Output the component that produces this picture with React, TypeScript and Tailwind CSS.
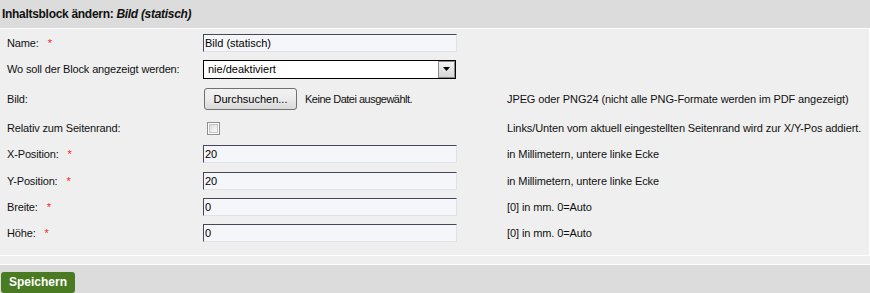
// inhaltsblock edit form (bild / statisch)

const font = { fontFamily: '"Liberation Sans", Arial, sans-serif' };

const Star = () => <span className="ml-[9px] text-[#ff1a1a]">*</span>;

const TextInput = ({ value }: { value: string }) => (
  <input
    type="text"
    defaultValue={value}
    className="w-[254px] h-[18px] bg-[#f5f6fa] border border-t-[#46465c] border-l-[#46465c] border-r-[#e1e2e8] border-b-[#e1e2e8] px-[1px] text-[11px] text-black outline-none"
  />
);

const Row = ({
  h,
  label,
  required,
  children,
  hint,
}: {
  h: string;
  label: string;
  required?: boolean;
  children?: React.ReactNode;
  hint?: string;
}) => (
  <div className={`grid grid-cols-[196px_304px_1fr] items-center pl-[7px] ${h}`}>
    <div className="text-[11px] tracking-[-0.15px] text-[#111]">
      {label}
      {required && <Star />}
    </div>
    <div className="flex items-center">{children}</div>
    <div className="text-[11px] tracking-[-0.1px] text-[#111] whitespace-nowrap">{hint}</div>
  </div>
);

export default function App() {
  return (
    <div className="w-[870px] bg-[#efefef]" style={font}>
      {/* title bar */}
      <div className="h-[29px] bg-[#dcdcdc] border-b border-white flex items-center pl-[2px] text-[12px] tracking-[-0.3px] font-bold text-[#111]">
        Inhaltsblock ändern:&nbsp;<i>Bild (statisch)</i>
      </div>

      {/* form rows */}
      <div className="pt-[1px] pb-[9px] border-b border-r border-white">
        <Row h="h-[26px]" label="Name:" required>
          <TextInput value="Bild (statisch)" />
        </Row>

        <Row h="h-[26px]" label="Wo soll der Block angezeigt werden:">
          <div className="w-[253px] h-[19px] bg-white border border-black flex items-center justify-between">
            <span className="pl-[4px] text-[11px] text-black">nie/deaktiviert</span>
            <span className="w-[17px] h-[17px] border border-[#8a8a8a] bg-gradient-to-b from-[#f4f4f4] to-[#d6d6d6] flex items-center justify-center">
              <svg width="7" height="4" viewBox="0 0 7 4">
                <path d="M0 0h7L3.5 4z" fill="#000" />
              </svg>
            </span>
          </div>
        </Row>

        <Row
          h="h-[34px]"
          label="Bild:"
          hint="JPEG oder PNG24 (nicht alle PNG-Formate werden im PDF angezeigt)"
        >
          <button className="ml-[1px] w-[93px] h-[22px] rounded-[3px] border border-[#707070] bg-gradient-to-b from-[#f2f2f2] via-[#ebebeb] to-[#d9d9d9] text-[11px] text-black">
            Durchsuchen...
          </button>
          <span className="ml-[8px] text-[11px] tracking-[-0.5px] text-[#111]">Keine Datei ausgewählt.</span>
        </Row>

        <Row
          h="h-[24px]"
          label="Relativ zum Seitenrand:"
          hint="Links/Unten vom aktuell eingestellten Seitenrand wird zur X/Y-Pos addiert."
        >
          <span className="ml-[4px] w-[13px] h-[13px] border border-[#8f8f8f] bg-white p-[1px]">
            <span className="block w-full h-full border border-[#c4c4c4] bg-gradient-to-br from-[#dcdcdc] to-[#fbfbfb]" />
          </span>
        </Row>

        <Row h="h-[28px]" label="X-Position:" required hint="in Millimetern, untere linke Ecke">
          <TextInput value="20" />
        </Row>

        <Row h="h-[26px]" label="Y-Position:" required hint="in Millimetern, untere linke Ecke">
          <TextInput value="20" />
        </Row>

        <Row h="h-[26px]" label="Breite:" required hint="[0] in mm. 0=Auto">
          <TextInput value="0" />
        </Row>

        <Row h="h-[26px]" label="Höhe:" required hint="[0] in mm. 0=Auto">
          <TextInput value="0" />
        </Row>
      </div>

      <div className="h-[8px]" />

      {/* footer */}
      <div className="h-[30px] bg-[#dcdcdc] border-t border-white pl-[1px] pt-[4px]">
        <button className="w-[74px] h-[21px] rounded-[3px] bg-[#4a7b22] text-white text-[12px] font-bold">
          Speichern
        </button>
      </div>
    </div>
  );
}
